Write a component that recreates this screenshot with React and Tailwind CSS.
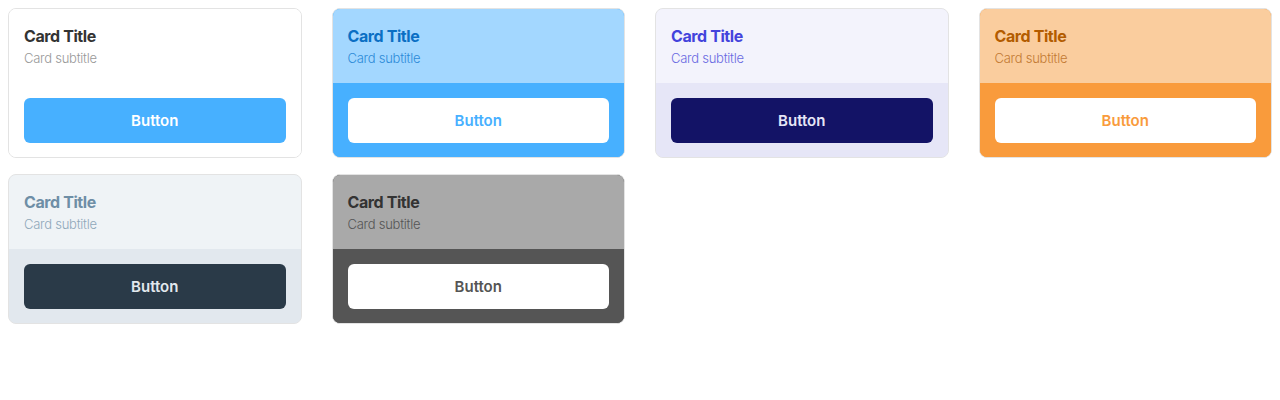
import React from "react";

const cards = [
    {
        card: "bg-white border-[#e3e3e3]",
        top: "bg-white",
        bottom: "bg-white",
        title: "text-[#333333]",
        subtitle: "text-[#999999]",
        button: "bg-[#47b0ff] text-white",
    },
    {
        card: "bg-[#47b0ff] border-[#e3e3e3]",
        top: "bg-[#a3d7ff]",
        bottom: "bg-[#47b0ff]",
        title: "text-[#0b6fc4]",
        subtitle: "text-[#2d8bd8]",
        button: "bg-white text-[#47b0ff]",
    },
    {
        card: "bg-[#e6e6f7] border-[#e3e3e3]",
        top: "bg-[#f3f3fc]",
        bottom: "bg-[#e6e6f7]",
        title: "text-[#4343dc]",
        subtitle: "text-[#6a6ae2]",
        button: "bg-[#131366] text-[#e6e6f7]",
    },
    {
        card: "bg-[#f99b3c] border-[#e3e3e3]",
        top: "bg-[#facd9e]",
        bottom: "bg-[#f99b3c]",
        title: "text-[#b35c00]",
        subtitle: "text-[#c27a33]",
        button: "bg-white text-[#f99b3c]",
    },
    {
        card: "bg-[#e2e8ee] border-[#e3e3e3]",
        top: "bg-[#eff3f6]",
        bottom: "bg-[#e2e8ee]",
        title: "text-[#6e8ea6]",
        subtitle: "text-[#8fa8ba]",
        button: "bg-[#2a3a48] text-[#e2e8ee]",
    },
    {
        card: "bg-[#555555] border-[#e3e3e3]",
        top: "bg-[#a9a9a9]",
        bottom: "bg-[#555555]",
        title: "text-[#333333]",
        subtitle: "text-[#555555]",
        button: "bg-white text-[#555555]",
    },
];

const Card = ({ theme }) => (
    <div className={`border rounded-lg overflow-hidden ${theme.card}`}>
        <div className={`px-[15px] pt-[15px] pb-[15px] ${theme.top}`}>
            <p className={`text-[16px] leading-6 font-bold tracking-[-0.025em] ${theme.title}`}>Card Title</p>
            <p className={`text-[13px] leading-5 font-light tracking-[-0.02em] ${theme.subtitle}`}>Card subtitle</p>
        </div>
        <div className={`px-[15px] pt-[15px] pb-[14px] ${theme.bottom}`}>
            <button className={`w-full h-[45px] pt-[2px] rounded-md text-[15px] font-semibold ${theme.button}`}>
                Button
            </button>
        </div>
    </div>
);

export default function App() {
    return (
        <div className="p-2 grid grid-cols-4 gap-x-[30px] gap-y-4" style={{ fontFamily: "Inter, 'Noto Sans', sans-serif" }}>
            {cards.map((theme, i) => (
                <Card key={i} theme={theme} />
            ))}
        </div>
    );
}
